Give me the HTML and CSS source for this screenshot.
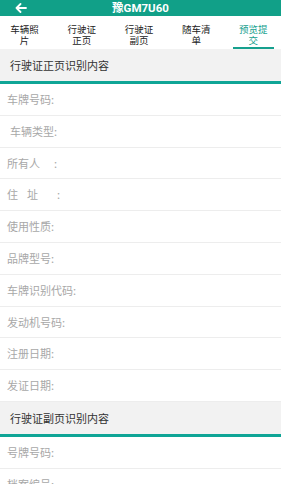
FILE: index.html
```html
<!DOCTYPE html>
<html lang="zh-CN">
<head>
  <meta charset="UTF-8">
  <meta name="viewport" content="width=device-width, initial-scale=1">
  <title>豫GM7U60</title>
  <link rel="stylesheet" href="styles.css">
</head>
<body>
  <div class="topbar">
    <svg class="back" width="12" height="10" viewBox="0 0 12 10">
      <path d="M11 5H1.5M5.5 1L1.5 5l4 4" fill="none" stroke="#fff" stroke-width="1.8" stroke-linecap="round" stroke-linejoin="round"/>
    </svg>
    <div class="title">豫GM7U60</div>
  </div>

  <div class="tabs">
    <div class="tab"><span>车辆照片</span></div>
    <div class="tab"><span>行驶证正页</span></div>
    <div class="tab"><span>行驶证副页</span></div>
    <div class="tab"><span>随车清单</span></div>
    <div class="tab active"><span>预览提交</span></div>
  </div>

  <div class="section">行驶证正页识别内容</div>
  <div class="row">车牌号码:</div>
  <div class="row"><span class="lead"></span>车辆类型:</div>
  <div class="row">所有人<span class="gap-l"></span>:</div>
  <div class="row">住<span class="gap-s"></span>址<span class="gap-m"></span>:</div>
  <div class="row">使用性质:</div>
  <div class="row">品牌型号:</div>
  <div class="row">车牌识别代码:</div>
  <div class="row">发动机号码:</div>
  <div class="row">注册日期:</div>
  <div class="row">发证日期:</div>

  <div class="section">行驶证副页识别内容</div>
  <div class="row">号牌号码:</div>
  <div class="row">档案编号:</div>
</body>
</html>
```

FILE: styles.css
```css
body {
  margin: 0;
  font-family: "Noto Sans CJK SC", "Noto Sans", sans-serif;
  background-color: #fff;
  overflow: hidden;
}
.topbar {
  height: 16px;
  background-color: #11a088;
  display: flex;
  align-items: center;
  justify-content: center;
  position: relative;
}
.back {
  position: absolute;
  left: 15px;
  top: 3px;
}
.title {
  color: #fff;
  font-family: Roboto, "Noto Sans CJK SC", sans-serif;
  font-weight: bold;
  font-size: 11.5px;
  line-height: 16px;
}
.tabs {
  display: flex;
  height: 33px;
  margin-left: -4px;
  background-color: #fff;
}
.tab {
  flex: 0 0 57.2px;
  display: flex;
  justify-content: center;
  padding-top: 8px;
  box-sizing: border-box;
  font-size: 9.5px;
  line-height: 11px;
  color: #222;
  position: relative;
}
.tab span {
  display: block;
  width: 29px;
  text-align: center;
}
.tab.active {
  color: #16a08e;
}
.tab.active::after {
  content: "";
  position: absolute;
  left: 8px;
  right: 8px;
  bottom: 0;
  height: 2px;
  background-color: #16a08e;
}
.section {
  height: 32px;
  line-height: 32px;
  padding-left: 10px;
  font-size: 11px;
  color: #333;
  background-color: #f2f2f2;
  border-bottom: 3px solid #0fa596;
}
.row {
  height: 30.8px;
  line-height: 31px;
  padding-left: 7px;
  font-size: 11px;
  color: #a8a8a8;
  border-bottom: 1px solid #ededed;
}
.lead {
  display: inline-block;
  width: 3px;
}
.gap-s {
  display: inline-block;
  width: 9px;
}
.gap-m {
  display: inline-block;
  width: 19px;
}
.gap-l {
  display: inline-block;
  width: 14px;
}
```
